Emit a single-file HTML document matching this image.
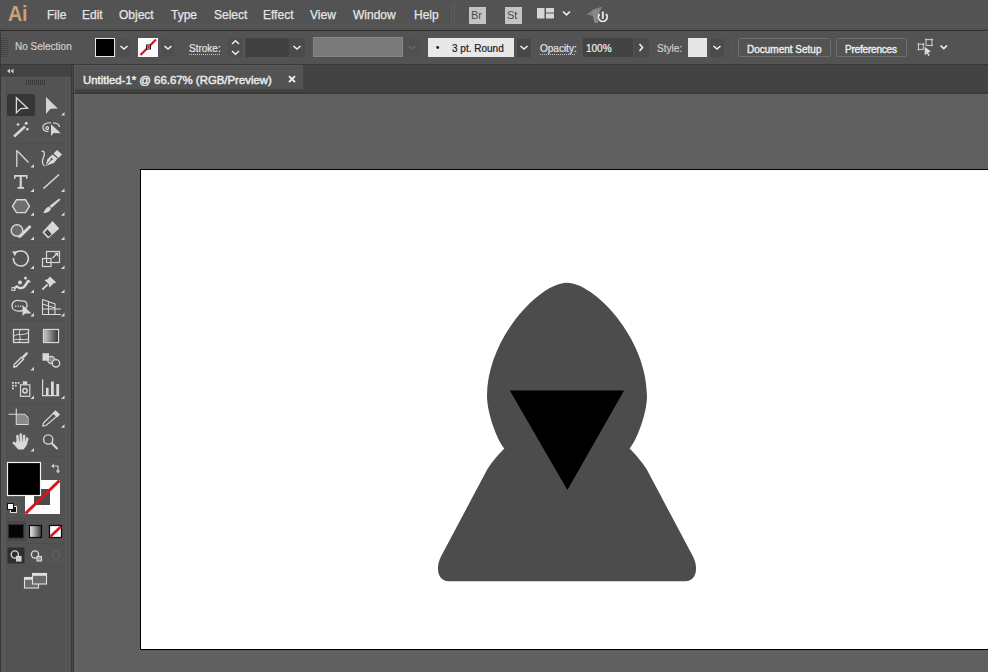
<!DOCTYPE html>
<html><head><meta charset="utf-8">
<style>
*{margin:0;padding:0;box-sizing:border-box}
html,body{width:988px;height:672px;overflow:hidden;background:#606060;font-family:"Liberation Sans",sans-serif;}
.a{position:absolute}
.mi{position:absolute;top:7px;font-size:12px;line-height:16px;color:#e6e6e6;white-space:nowrap;-webkit-text-stroke:0.25px #e6e6e6}
.ct{position:absolute;font-size:10px;line-height:12px;color:#e2e2e2;white-space:nowrap;-webkit-text-stroke:0.2px currentColor}
svg{position:absolute;left:0;top:0}
</style></head><body>
<!-- ============ BACKGROUND BLOCKS ============ -->
<div class="a" style="left:0;top:0;width:988px;height:30px;background:#535353"></div>
<div class="a" style="left:0;top:25px;width:988px;height:1px;background:#595959"></div>
<div class="a" style="left:0;top:26px;width:988px;height:1px;background:#4f4f4f"></div>
<div class="a" style="left:0;top:27px;width:988px;height:1px;background:#575757"></div>
<div class="a" style="left:0;top:28px;width:988px;height:2px;background:#4f4f4f"></div>
<div class="a" style="left:0;top:30px;width:988px;height:1px;background:#303030"></div>
<div class="a" style="left:0;top:31px;width:988px;height:33px;background:#535353"></div>
<div class="a" style="left:0;top:64px;width:988px;height:1px;background:#383838"></div>
<!-- tools panel -->
<div class="a" style="left:0;top:65px;width:71px;height:607px;background:#535353"></div>
<div class="a" style="left:0;top:65px;width:1px;height:607px;background:#383838"></div>
<div class="a" style="left:71px;top:65px;width:3px;height:607px;background:#464646"></div>
<div class="a" style="left:71px;top:65px;width:1px;height:607px;background:#383838"></div>
<div class="a" style="left:73px;top:65px;width:1px;height:607px;background:#383838"></div>
<div class="a" style="left:1px;top:65px;width:70px;height:12px;background:#434343"></div>
<div class="a" style="left:1px;top:77px;width:70px;height:1px;background:#5a5a5a"></div>
<!-- tab bar -->
<div class="a" style="left:74px;top:65px;width:914px;height:28px;background:#434343"></div>
<div class="a" style="left:75px;top:65px;width:228px;height:28px;background:#535353"></div>
<div class="a" style="left:74px;top:89px;width:914px;height:5px;background:#474747"></div>
<div class="a" style="left:74px;top:90px;width:914px;height:1px;background:#3e3e3e"></div>
<div class="a" style="left:74px;top:92px;width:914px;height:2px;background:#3a3a3a"></div>
<!-- canvas -->
<div class="a" style="left:74px;top:94px;width:914px;height:578px;background:#606060"></div>
<div class="a" style="left:74px;top:94px;width:4px;height:578px;background:#636363"></div>
<div class="a" style="left:140px;top:169px;width:860px;height:481px;background:#fff;border:1px solid #000"></div>
<div class="a" style="left:141px;top:650px;width:847px;height:1px;background:#575757"></div>

<!-- ============ MENU BAR ============ -->
<div class="a" style="left:8px;top:1px;font-size:22px;line-height:26px;color:#c9a07c;font-weight:bold;letter-spacing:-0.3px;transform:scaleX(0.9);transform-origin:0 0">Ai</div>
<span class="mi" style="left:47px">File</span>
<span class="mi" style="left:82px">Edit</span>
<span class="mi" style="left:119px">Object</span>
<span class="mi" style="left:171px">Type</span>
<span class="mi" style="left:214px">Select</span>
<span class="mi" style="left:263px">Effect</span>
<span class="mi" style="left:310px">View</span>
<span class="mi" style="left:353px">Window</span>
<span class="mi" style="left:414px">Help</span>
<div class="a" style="left:451px;top:4px;width:1px;height:22px;background:#5e5e5e"></div>
<div class="a" style="left:454px;top:4px;width:1px;height:22px;background:#5e5e5e"></div>
<div class="a" style="left:469px;top:7px;width:17px;height:17px;background:#c4c4c4"></div>
<div class="a" style="left:471px;top:9px;font-size:11px;line-height:13px;color:#4a4a4a">Br</div>
<div class="a" style="left:505px;top:7px;width:17px;height:17px;background:#c4c4c4"></div>
<div class="a" style="left:507px;top:9px;font-size:11px;line-height:13px;color:#4a4a4a">St</div>
<svg width="988" height="40">
<rect x="537" y="8" width="7.5" height="10.5" fill="#d6d6d6"/>
<rect x="546" y="8" width="8" height="4.5" fill="#d6d6d6"/>
<rect x="546" y="13.5" width="8" height="5" fill="#d6d6d6"/>
<path d="M563 11.5 L566.5 14.8 L570 11.5" fill="none" stroke="#eeeeee" stroke-width="1.7"/>
<path d="M586.5 14.5 L594 9 L602.5 6.5 L600 11 L593 16 Z" fill="#7e7e7e"/>
<path d="M592.5 11 L600 8.5 L599 15 L598 23 L594.5 23 L593 17 Z" fill="#888888"/>
<circle cx="602.8" cy="17.5" r="5.6" fill="#535353"/>
<path d="M599.6 14 A4.4 4.4 0 1 0 606 14" fill="none" stroke="#e8e8e8" stroke-width="1.9"/>
<path d="M602.8 11.5 V18.8" stroke="#e8e8e8" stroke-width="1.9"/>
</svg>

<!-- ============ CONTROL BAR ============ -->
<svg width="988" height="672">
<!-- left grip -->
<g fill="#464646">
<rect x="1" y="38" width="7" height="1"/><rect x="1" y="40" width="7" height="1"/><rect x="1" y="42" width="7" height="1"/><rect x="1" y="44" width="7" height="1"/><rect x="1" y="46" width="7" height="1"/><rect x="1" y="48" width="7" height="1"/><rect x="1" y="50" width="7" height="1"/><rect x="1" y="52" width="7" height="1"/><rect x="1" y="54" width="7" height="1"/><rect x="1" y="56" width="7" height="1"/>
</g>
<rect x="0" y="31" width="1" height="33" fill="#3a3a3a"/>
<!-- fill swatch -->
<rect x="95.5" y="38.5" width="19" height="18" fill="#000" stroke="#e6e6e6" stroke-width="1"/>
<rect x="117" y="39" width="13" height="18" fill="#4e4e4e"/>
<path d="M120.5 46 L124 49 L127.5 46" fill="none" stroke="#f0f0f0" stroke-width="1.6"/>
<!-- stroke swatch -->
<rect x="138" y="38" width="20" height="19" fill="#fbfbfb"/>
<path d="M140.5 55 L156 39.5" stroke="#d0141e" stroke-width="2.2"/>
<rect x="146.5" y="45" width="4" height="4" fill="#fff" stroke="#1a1a1a" stroke-width="1"/>
<rect x="147.3" y="45.8" width="2.4" height="2.4" fill="#d0141e"/>
<rect x="161" y="39" width="13" height="18" fill="#4e4e4e"/>
<path d="M164.5 46 L168 49 L171.5 46" fill="none" stroke="#f0f0f0" stroke-width="1.6"/>
<!-- Stroke: underline -->
<path d="M189 54.5 H220" stroke="#c8c8c8" stroke-width="1" stroke-dasharray="1 1"/>
<!-- spinner -->
<rect x="228" y="38" width="15" height="19" fill="#4e4e4e"/>
<path d="M232 44 L235.5 40.8 L239 44" fill="none" stroke="#eeeeee" stroke-width="1.5"/>
<path d="M232 51 L235.5 54.2 L239 51" fill="none" stroke="#eeeeee" stroke-width="1.5"/>
<!-- stroke weight dropdown -->
<rect x="245" y="38" width="44" height="19" fill="#414141"/>
<rect x="244" y="38" width="1" height="19" fill="#5c5c5c"/>
<rect x="289" y="38" width="16" height="19" fill="#4b4b4b"/>
<path d="M293.5 46 L297 49 L300.5 46" fill="none" stroke="#f0f0f0" stroke-width="1.6"/>
<!-- gray bar (disabled) -->
<rect x="313.5" y="37.5" width="89" height="19" fill="#7a7a7a" stroke="#858585" stroke-width="1"/>
<rect x="404" y="38" width="15" height="19" fill="#505050"/>
<path d="M408.5 46 L412 49 L415.5 46" fill="none" stroke="#666" stroke-width="1.5"/>
<!-- 3 pt round -->
<rect x="428" y="38" width="86" height="19" fill="#e8e8e8"/>
<circle cx="437.7" cy="47.5" r="1.4" fill="#1a1a1a"/>
<rect x="517" y="39" width="14" height="18" fill="#474747"/>
<path d="M520.5 46 L524 49 L527.5 46" fill="none" stroke="#f0f0f0" stroke-width="1.6"/>
<!-- Opacity: underline -->
<path d="M540 54.5 H576" stroke="#c8c8c8" stroke-width="1" stroke-dasharray="1 1"/>
<!-- 100% field -->
<rect x="583" y="38" width="50" height="19" fill="#434343"/>
<rect x="634" y="38" width="15" height="19" fill="#4b4b4b"/>
<path d="M639.5 44 L642.5 47.5 L639.5 51" fill="none" stroke="#f0f0f0" stroke-width="1.6"/>
<!-- style swatch -->
<rect x="688" y="38" width="19" height="19" fill="#e6e6e6"/>
<rect x="710" y="39" width="14" height="18" fill="#4b4b4b"/>
<path d="M713.5 46 L717 49 L720.5 46" fill="none" stroke="#f0f0f0" stroke-width="1.6"/>
<rect x="731" y="36" width="1" height="22" fill="#575757"/>
<!-- buttons -->
<rect x="738.5" y="38.5" width="92" height="18" rx="1" fill="#535353" stroke="#6e6e6e" stroke-width="1"/>
<rect x="836.5" y="38.5" width="70" height="18" rx="1" fill="#535353" stroke="#6e6e6e" stroke-width="1"/>
<!-- transform icon -->
<g fill="none" stroke="#cfcfcf" stroke-width="1">
<rect x="918.5" y="44.2" width="4.8" height="5.2"/>
<rect x="926" y="39.6" width="6" height="5.8"/>
</g>
<g fill="#cfcfcf"><rect x="917.6" y="43.3" width="1.6" height="1.6"/><rect x="922.6" y="43.3" width="1.6" height="1.6"/><rect x="917.6" y="48.8" width="1.6" height="1.6"/><rect x="925.1" y="38.7" width="1.6" height="1.6"/><rect x="931.3" y="38.7" width="1.6" height="1.6"/><rect x="931.3" y="44.6" width="1.6" height="1.6"/></g>
<path d="M924.7 46.8 L924.7 55.6 L926.9 53.2 L928.4 56.2 L929.6 55.5 L928.2 52.4 L931 51.6 Z" fill="#dcdcdc"/>
<path d="M940.5 45.5 L943.8 48.6 L947 45.5" fill="none" stroke="#f0f0f0" stroke-width="1.7"/>
</svg>

<span class="ct" style="left:15px;top:41px;color:#cdcdcd">No Selection</span>
<span class="ct" style="left:189px;top:43px">Stroke:</span>
<span class="ct" style="left:452px;top:43px;color:#1a1a1a">3 pt. Round</span>
<span class="ct" style="left:540px;top:43px">Opacity:</span>
<span class="ct" style="left:586px;top:43px;color:#f0f0f0">100%</span>
<span class="ct" style="left:657px;top:43px;color:#cfcfcf">Style:</span>
<span class="ct" style="left:747px;top:44px;color:#ececec;letter-spacing:0px;-webkit-text-stroke:0.4px #ececec">Document Setup</span>
<span class="ct" style="left:845px;top:44px;color:#ececec;letter-spacing:-0.2px;-webkit-text-stroke:0.4px #ececec">Preferences</span>

<!-- tab title -->
<svg width="988" height="100"><path d="M289 76.2 L295 82.2 M295 76.2 L289 82.2" stroke="#f0f0f0" stroke-width="1.9"/>
<rect x="75" y="65" width="228" height="1" fill="#5a5a5a"/>
<rect x="74" y="65" width="1" height="28" fill="#5b5b5b"/>
</svg>
<span class="a" style="left:83px;top:74px;font-size:11.4px;line-height:13px;color:#ececec;white-space:nowrap;-webkit-text-stroke:0.45px #ececec">Untitled-1* @ 66.67% (RGB/Preview)</span>

<!-- ============ FIGURE ============ -->
<svg width="988" height="672">
<path d="M567.0 282.8 C540.0 282.8 487.0 338.0 487.0 396.0 C487.0 413.0 497.0 440.0 504.4 448.6 C501.0 452.0 492.5 461.0 487.2 469.5 L441.0 556.5 C435.5 567.0 437.0 581.3 449.0 581.3 L685.0 581.3 C697.0 581.3 698.5 567.0 693.0 556.5 L646.8 469.5 C641.5 461.0 633.0 452.0 629.6 448.6 C637.0 440.0 647.0 413.0 647.0 396.0 C647.0 338.0 594.0 282.8 567.0 282.8 Z" fill="#4c4c4c"/>
<path d="M509.8 390.6 L624.1 390.6 L567.4 490 Z" fill="#000"/>
</svg>
<!--ICONS-->
<svg width="988" height="672">
<!-- header << -->
<path d="M10 68.5 L7 71 L10 73.5 Z M13.5 68.5 L10.5 71 L13.5 73.5 Z" fill="#cfcfcf"/>
<!-- grip -->
<g fill="#3a3a3a"><rect x="26" y="80" width="1" height="5"/><rect x="28" y="80" width="1" height="5"/><rect x="30" y="80" width="1" height="5"/><rect x="32" y="80" width="1" height="5"/><rect x="34" y="80" width="1" height="5"/><rect x="36" y="80" width="1" height="5"/><rect x="38" y="80" width="1" height="5"/><rect x="40" y="80" width="1" height="5"/><rect x="42" y="80" width="1" height="5"/><rect x="44" y="80" width="1" height="5"/></g>
<!-- inner frame lines -->
<rect x="1" y="78" width="6" height="594" fill="#575757"/>
<rect x="65" y="78" width="6" height="594" fill="#555555"/>
<rect x="6" y="78" width="1" height="594" fill="#4f4f4f"/>
<rect x="65" y="78" width="1" height="594" fill="#585858"/>
<rect x="7" y="143" width="58" height="1" fill="#4e4e4e"/>
<rect x="7" y="242" width="58" height="1" fill="#4e4e4e"/>
<rect x="7" y="320" width="58" height="1" fill="#4e4e4e"/>
<rect x="7" y="403" width="58" height="1" fill="#4e4e4e"/>
<rect x="7" y="456" width="58" height="1" fill="#4e4e4e"/>
<rect x="7" y="518" width="58" height="1" fill="#4e4e4e"/>
<rect x="7" y="543" width="58" height="1" fill="#4e4e4e"/>
<rect x="7" y="566" width="58" height="1" fill="#4e4e4e"/>

<!-- selected tool bg -->
<rect x="7" y="94" width="28" height="22" rx="2.5" fill="#363636"/>
<!-- selection arrow -->
<path d="M16.4 97.8 L16.4 112.8 L20.8 108.6 L27.6 108.2 Z" fill="none" stroke="#dcdcdc" stroke-width="1.3" stroke-linejoin="miter"/>
<!-- direct selection -->
<path d="M46 97 L46 114 L50.4 108.8 L57.8 108.4 Z" fill="#d4d4d4"/>

<g fill="#d8d8d8">
<!-- flyout triangles -->
<path d="M64.5 111.9 V115.5 H60.9 Z"/>
<path d="M34 163.9 V167.5 H30.4 Z"/>
<path d="M34 188.4 V192 H30.4 Z"/>
<path d="M64.5 188.4 V192 H60.9 Z"/>
<path d="M34 212.2 V215.8 H30.4 Z"/>
<path d="M64.5 212.2 V215.8 H60.9 Z"/>
<path d="M34 236.4 V240 H30.4 Z"/>
<path d="M64.5 236.4 V240 H60.9 Z"/>
<path d="M34 265.4 V269 H30.4 Z"/>
<path d="M64.5 265.4 V269 H60.9 Z"/>
<path d="M34 289.4 V293 H30.4 Z"/>
<path d="M64.5 289.4 V293 H60.9 Z"/>
<path d="M34 312.8 V316.4 H30.4 Z"/>
<path d="M64.5 312.8 V316.4 H60.9 Z"/>
<path d="M34 366.8 V370.4 H30.4 Z"/>
<path d="M34 395.4 V399 H30.4 Z"/>
<path d="M64.5 395.4 V399 H60.9 Z"/>
<path d="M64.5 424.2 V427.8 H60.9 Z"/>
<path d="M34 448.0 V451.6 H30.4 Z"/>
</g>

<g fill="none" stroke="#d8d8d8" stroke-width="1.3">
<!-- magic wand -->
<path d="M14 136.5 L25 126.5" stroke-width="2.4"/>
<!-- lasso loop -->
<path d="M51 122.8 C46 122.5 42.5 124.5 42.8 127.5 C43 130.5 46 131.8 48.5 131.2 M45.5 127.5 C45.5 129.5 48 130 48.5 128.5 C49 127 47 126 46 127.5" stroke-width="1.2"/>
<path d="M53 122.8 C57 123 59.5 124.5 59.5 127" stroke-width="1.2"/>
<!-- anchor tool -->
<path d="M16.8 150 V167 M16.8 150.5 L28.5 162.5" stroke-width="1.3"/>
<!-- pen curl -->
<path d="M41.5 151.5 C44 150.5 45 153 44 156 C42.5 159.5 41 163 44.5 166" stroke-width="1.3"/>
<!-- line tool -->
<path d="M43.5 188.5 L59 174.5" stroke-width="1.6"/>
<!-- hexagon -->
<path d="M16.5 199.8 H25.5 L29.5 206.2 L25.5 212.6 H16.5 L12.5 206.2 Z" fill="#6f6f6f" stroke-width="1.4"/>
<!-- shaper circle -->
<circle cx="17" cy="230.5" r="5.8" fill="#6a6a6a" stroke-width="1.4"/>
<!-- rotate -->
<path d="M15 253 C18 250 25 250 27.5 255 C30 260 26.5 266 21 266 C16 266 13 262 13.5 258" stroke-width="1.6"/>
<!-- scale -->
<rect x="46.5" y="251.5" width="13" height="11" stroke-width="1.2"/>
<rect x="42.5" y="258.5" width="8.5" height="8" stroke-width="1.2"/>
<path d="M52.5 258 L57 253.8" stroke-width="1.3"/>
<!-- shape builder -->
<path d="M21 301 C16 299 11.5 302 12 306.5 C12.5 310.5 17 311.5 21 311 C25 310.5 27.5 307.5 27 304.5 C26.5 301.5 24 300.5 21 301" stroke-width="1.3"/>
<!-- perspective grid -->
<path d="M42.5 299.5 V314.5 H61 M42.5 299.5 L55 304 V314.5 M42.5 304 L55 308 M42.5 309 H61 M48.5 301.5 V314.5" stroke-width="1.1"/>
<!-- mesh -->
<rect x="13.5" y="329.5" width="15" height="13" stroke-width="1.3"/>
<path d="M14 336 C18 333 22 336 28 333 M20 330 C18 335 22 338 19 342 M14 340 C18 338 24 341 28 339" stroke-width="1"/>
<!-- gradient box -->
<rect x="43.5" y="329.5" width="15" height="13" stroke-width="1.3"/>
<!-- eyedropper -->
<path d="M13.8 367 L14.2 364.5 L21.5 357.2 L23.5 359.2 L16.2 366.5 Z" stroke-width="1.4"/>
<!-- blend -->
<circle cx="51.2" cy="360" r="3.6" fill="#8a8a8a" stroke-width="1.1"/>
<circle cx="56" cy="363.3" r="3.7" fill="#535353" stroke-width="1.3"/>
<!-- symbol sprayer -->
<rect x="20.5" y="384.8" width="9.3" height="11.5" stroke-width="1.2"/>
<circle cx="25" cy="390.8" r="2.2" stroke-width="1.5"/>
<!-- column graph -->
<path d="M42.6 379.5 V395.6 H59.3" stroke-width="1.2"/>
<!-- artboard -->
<path d="M8.5 414.3 H16.3 M16.3 408.5 V414.3 M16.3 414.3 H24.5 L28 417.8 V424.5 H16.3 Z" stroke-width="1.1"/>
<!-- zoom -->
<circle cx="48.2" cy="439.5" r="4.6" stroke-width="1.4"/>
<path d="M51.6 443 L57.5 449" stroke-width="2"/>
</g>

<g fill="#d8d8d8">
<!-- wand stars -->
<path d="M18 122.5 L18.8 124 L20.4 124.5 L18.8 125.1 L18 126.6 L17.2 125.1 L15.6 124.5 L17.2 124 Z"/>
<circle cx="26.2" cy="123.2" r="1.5"/>
<circle cx="27.3" cy="129.2" r="1.3"/>
<!-- lasso pointer -->
<path d="M51 124.2 L51 136 L53.8 133 L60.8 133.2 Z"/>
<!-- pen nib -->
<path d="M45.5 166 L47.5 159 L52.5 154.5 L57.5 158.5 L54 163 Z"/>
<path d="M53.5 153.5 L57 150 L62 154.5 L58.5 158 Z"/>
<path d="M46.5 165 L51.2 159.6" stroke="#535353" stroke-width="1"/>
<circle cx="51.6" cy="159.2" r="1.1" fill="#535353"/>
<!-- Type T -->
<path d="M14 175 H27.5 V178.7 H26 V176.8 H21.8 V187 H24 V188.8 H17.5 V187 H19.7 V176.8 H15.5 V178.7 H14 Z"/>
<!-- paintbrush -->
<path d="M59.2 198.5 L60.5 199.8 L51.5 208 L49.5 206 Z"/>
<path d="M49 206.5 L51 208.5 C50.5 211 47.5 213.2 43.3 213.2 C44.5 210 46 207.5 49 206.5 Z"/>
<!-- shaper pencil -->
<path d="M29.5 225 L31.5 227 L21 237.5 L18.3 238 L18.8 235.5 Z"/>
<!-- eraser -->
<path d="M52.5 221 L59.3 228.5 L48.1 238.5 L42.3 232.3 Z"/>
<path d="M44.6 232.2 L47.4 229.6 L51.6 234.2 L48.6 236.6 Z" fill="#333"/>
<path d="M46 230.9 L50.1 235.4" stroke="#9a9a9a" stroke-width="0.7"/>
<!-- rotate arrow head -->
<path d="M12.2 251.2 L17.3 251.6 L14.8 256.2 Z"/>
<!-- scale arrowhead -->
<path d="M58.3 252.8 L58.3 256.8 L54.3 252.8 Z"/>
<!-- width tool -->
<path d="M13.5 289 C15 285 17 284.5 19 286.5 C21 288 24 286 26 282 C27.5 279 29 279.5 30 281 L31 283 C29.5 281.5 28.5 282.5 27.5 284.5 C25 289 21 290.5 18 288.5 C16.5 287.5 15.5 288 15 289.5 Z"/>
<circle cx="20" cy="282.5" r="2" />
<circle cx="25.5" cy="278" r="1.5"/>
<rect x="12" y="287.5" width="3" height="3" fill="none" stroke="#d8d8d8" stroke-width="1"/>
<!-- puppet pin -->
<path d="M50 276.5 L56.3 282.6 L53.5 283.5 L49.5 287.5 L48.5 284 L44.5 280 L47.5 279.2 Z"/>
<path d="M47.5 284.5 L42.3 289.6" stroke="#d8d8d8" stroke-width="1.8"/>
<!-- shape builder pointer -->
<path d="M22.5 305 L22.5 316 L25.2 313.5 L31.5 313.5 Z"/>
<g fill="#d8d8d8"><rect x="15" y="305.5" width="1.3" height="1.3"/><rect x="17.5" y="305.5" width="1.3" height="1.3"/><rect x="20" y="305.5" width="1.3" height="1.3"/></g>
<!-- gradient fill -->
<rect x="44.2" y="330.2" width="13.6" height="11.6" fill="url(#gr)"/>
<!-- eyedropper bulb -->
<path d="M22 356.5 L26 352.5 C27 351.8 28.5 353 27.8 354 L23.8 358.2 Z"/>
<!-- blend square -->
<rect x="42.5" y="353.2" width="6.5" height="7.5"/>
<!-- symbol dots -->
<rect x="12" y="382" width="1.8" height="1.8"/><rect x="14.9" y="382" width="1.8" height="1.8"/><rect x="17.7" y="382" width="1.8" height="1.8"/>
<rect x="12" y="384.8" width="1.8" height="1.8"/><rect x="14.9" y="384.8" width="1.8" height="1.8"/>
<rect x="12" y="387.6" width="1.8" height="1.8"/>
<rect x="22.8" y="381.3" width="4.4" height="3"/>
<!-- column bars -->
<rect x="46" y="387.7" width="2.6" height="8"/><rect x="51" y="381.5" width="2.8" height="14"/><rect x="56.3" y="384" width="2.8" height="11.5"/>
<!-- artboard fill -->
<path d="M17 415 H24 L27.4 418.4 V423.9 H17 Z" fill="#8a8a8a"/>
<!-- slice -->
<path d="M54 412.5 L57.5 415.8 L46 425.5 L42.8 426 L43.5 423 Z" fill="none" stroke="#d8d8d8" stroke-width="1.2"/>
<path d="M55.5 410.3 L60 414.5 L57 417.5 L52.5 413.3 Z"/>
<!-- hand -->
<path d="M15.8 441.5 H26.8 L26.2 446 L23.5 449.6 H18.3 L15.8 446.5 Z"/>
<g stroke="#d8d8d8" stroke-width="2.5" stroke-linecap="round"><path d="M13.8 442.8 L17.8 446.5"/><path d="M17.4 436 L17.9 443"/><path d="M20.8 434.5 V443"/><path d="M24.1 436 L23.7 443"/><path d="M27.2 438.6 L25.9 444"/></g>
</g>
<defs><linearGradient id="gr" x1="0" x2="1" y1="0" y2="0"><stop offset="0" stop-color="#c8c8c8"/><stop offset="1" stop-color="#3a3a3a"/></linearGradient></defs>

<!-- ===== color section ===== -->
<!-- stroke swatch -->
<rect x="25" y="480" width="35" height="34" fill="#fdfdfd"/>
<rect x="34" y="489" width="16" height="16" fill="#4a4a4a"/>
<path d="M25.5 513.5 L59.5 480.5" stroke="#d8141e" stroke-width="3"/>
<!-- fill swatch -->
<rect x="7.5" y="462.5" width="33" height="33" fill="#000" stroke="#f2f2f2" stroke-width="1.2"/>
<!-- swap -->
<g fill="none" stroke="#cfcfcf" stroke-width="1.2"><path d="M53 466 H58 V471"/></g>
<path d="M51 466 L54 463.8 L54 468.2 Z M58 473.5 L55.8 470.5 L60.2 470.5 Z" fill="#cfcfcf"/>
<!-- default small -->
<rect x="10.5" y="506.5" width="6" height="6" fill="#111" stroke="#e0e0e0" stroke-width="1"/>
<rect x="7.5" y="503.5" width="6" height="6" fill="#fafafa" stroke="#111" stroke-width="1"/>
<!-- mode row -->
<rect x="7" y="521" width="19" height="20" fill="#4a4a4a"/>
<rect x="8.5" y="524.5" width="15" height="13.5" fill="#050505" stroke="#2e2e2e" stroke-width="1"/>
<rect x="29.5" y="525.5" width="12" height="12" fill="url(#gr2)" stroke="#0a0a0a" stroke-width="1.2"/>
<rect x="49.5" y="525.5" width="12" height="12" fill="#fff" stroke="#0a0a0a" stroke-width="1.2"/>
<path d="M50.5 536.5 L61 526.5" stroke="#e0141e" stroke-width="2.6"/>
<defs><linearGradient id="gr2" x1="0" x2="1" y1="0" y2="0"><stop offset="0" stop-color="#f4f4f4"/><stop offset="1" stop-color="#333"/></linearGradient></defs>
<!-- draw modes -->
<rect x="7.5" y="547.5" width="17" height="16" fill="#2f2f2f"/>
<g fill="none" stroke="#d8d8d8" stroke-width="1.1">
<circle cx="14.8" cy="554.5" r="3.6" stroke-width="1.4"/>
<rect x="16.5" y="556.5" width="4.5" height="4.5" fill="#cfcfcf"/>
<circle cx="35" cy="554.5" r="3.6" stroke-width="1.4"/>
<rect x="37" y="556.5" width="4.5" height="4.5" fill="#999"/>
</g>
<circle cx="56" cy="555" r="3.8" fill="none" stroke="#5f5f5f" stroke-width="1.6"/>
<!-- screen mode -->
<g stroke="#e0e0e0" stroke-width="1.1">
<rect x="24.5" y="577.5" width="14" height="10.5" fill="#6a6a6a"/>
<rect x="32.5" y="573.5" width="14" height="10.5" fill="#6a6a6a"/>
</g>
<rect x="33" y="574" width="13" height="1.8" fill="#e0e0e0"/>
<rect x="25" y="578" width="7.5" height="1.8" fill="#e0e0e0"/>
</svg>

</body></html>
